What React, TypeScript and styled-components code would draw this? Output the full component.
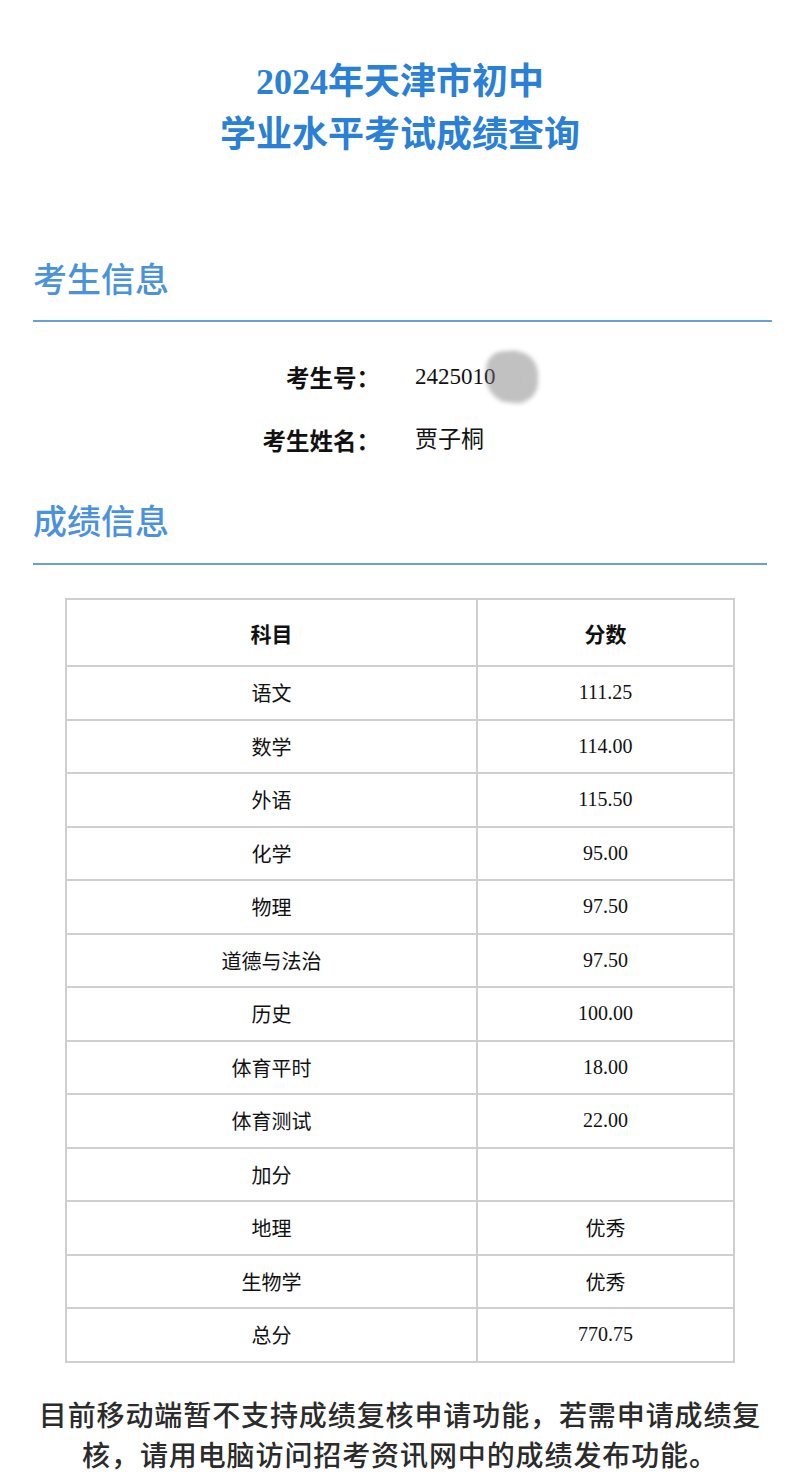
import React from "react";
import styled, { createGlobalStyle } from "styled-components";

const GlobalStyle = createGlobalStyle`
  html, body {
    margin: 0;
    padding: 0;
    background: #ffffff;
  }
  body {
    font-family: "Noto Sans CJK SC", "Noto Sans", sans-serif;
    color: #111;
  }
`;

const Page = styled.div`
  width: 800px;
  display: flex;
  flex-direction: column;
  padding-bottom: 20px;
`;

const Title = styled.h1`
  margin: 56px 0 0;
  text-align: center;
  font-family: "Liberation Serif", "Noto Sans CJK SC", serif;
  font-size: 36px;
  line-height: 53px;
  font-weight: 700;
  color: #2a7fd6;
`;

const SectionHeader = styled.h2<{ $top: number; $right: number; $pad: number }>`
  margin: ${(p) => p.$top}px ${(p) => p.$right}px 0 33px;
  padding-bottom: ${(p) => p.$pad}px;
  border-bottom: 2px solid #6b9fd3;
  font-size: 34px;
  line-height: 44px;
  font-weight: 500;
  color: #4a92dc;
`;

const InfoList = styled.div`
  margin-top: 35px;
  display: grid;
  grid-template-columns: 380px 1fr;
  column-gap: 35px;
  row-gap: 23px;
`;

const InfoLabel = styled.div`
  text-align: right;
  font-size: 23.5px;
  line-height: 40px;
  height: 40px;
  font-weight: 700;
  color: #111;
`;

const InfoValue = styled.div`
  display: flex;
  align-items: center;
  height: 40px;
  font-family: "Liberation Serif", "Noto Sans CJK SC", serif;
  font-size: 23px;
  line-height: 40px;
  color: #111;
`;

const Smudge = styled.span`
  display: inline-block;
  width: 52px;
  height: 52px;
  margin-left: -10px;
  border-radius: 35% 45% 40% 50%;
  background: repeating-linear-gradient(
    172deg,
    rgba(80, 80, 80, 0.75) 0px,
    rgba(170, 170, 170, 0.5) 3px,
    rgba(100, 100, 100, 0.7) 5px
  );
  filter: blur(2px);
  opacity: 0.75;
`;

const ScoreTable = styled.table`
  margin: 33px 0 0 65px;
  width: 670px;
  border-collapse: collapse;
  border: 2px solid #cfcfcf;
  table-layout: fixed;
`;

const HeadCell = styled.th`
  height: 65px;
  border: 2px solid #cfcfcf;
  font-size: 21px;
  font-weight: 700;
  color: #111;
  text-align: center;
  padding: 0;
`;

const Row = styled.tr`
  height: 53.5px;
`;

const Cell = styled.td<{ $num?: boolean }>`
  border: 2px solid #cfcfcf;
  text-align: center;
  padding: 0;
  font-family: ${(p) =>
    p.$num
      ? `"Liberation Serif", "Noto Sans CJK SC", serif`
      : `"Noto Sans CJK SC", sans-serif`};
  font-size: 20px;
  color: #111;
`;

const Notice = styled.p`
  margin: 31px auto 0;
  width: 724px;
  text-align: center;
  font-size: 28px;
  letter-spacing: 0.9px;
  line-height: 40px;
  font-weight: 500;
  color: #2b2b2b;
`;

const scores: [string, string][] = [
  ["语文", "111.25"],
  ["数学", "114.00"],
  ["外语", "115.50"],
  ["化学", "95.00"],
  ["物理", "97.50"],
  ["道德与法治", "97.50"],
  ["历史", "100.00"],
  ["体育平时", "18.00"],
  ["体育测试", "22.00"],
  ["加分", ""],
  ["地理", "优秀"],
  ["生物学", "优秀"],
  ["总分", "770.75"],
];

export default function App() {
  return (
    <>
      <GlobalStyle />
      <Page>
        <Title>
          2024年天津市初中
          <br />
          学业水平考试成绩查询
        </Title>

        <SectionHeader $top={94} $right={28} $pad={20}>
          考生信息
        </SectionHeader>

        <InfoList>
          <InfoLabel>考生号：</InfoLabel>
          <InfoValue>
            2425010
            <Smudge />
          </InfoValue>
          <InfoLabel>考生姓名：</InfoLabel>
          <InfoValue>贾子桐</InfoValue>
        </InfoList>

        <SectionHeader $top={38} $right={33} $pad={21}>
          成绩信息
        </SectionHeader>

        <ScoreTable>
          <colgroup>
            <col style={{ width: "411px" }} />
            <col />
          </colgroup>
          <thead>
            <tr>
              <HeadCell>科目</HeadCell>
              <HeadCell>分数</HeadCell>
            </tr>
          </thead>
          <tbody>
            {scores.map(([subject, score]) => (
              <Row key={subject}>
                <Cell>{subject}</Cell>
                <Cell $num>{score}</Cell>
              </Row>
            ))}
          </tbody>
        </ScoreTable>

        <Notice>
          目前移动端暂不支持成绩复核申请功能，若需申请成绩复核，请用电脑访问招考资讯网中的成绩发布功能。
        </Notice>
      </Page>
    </>
  );
}
